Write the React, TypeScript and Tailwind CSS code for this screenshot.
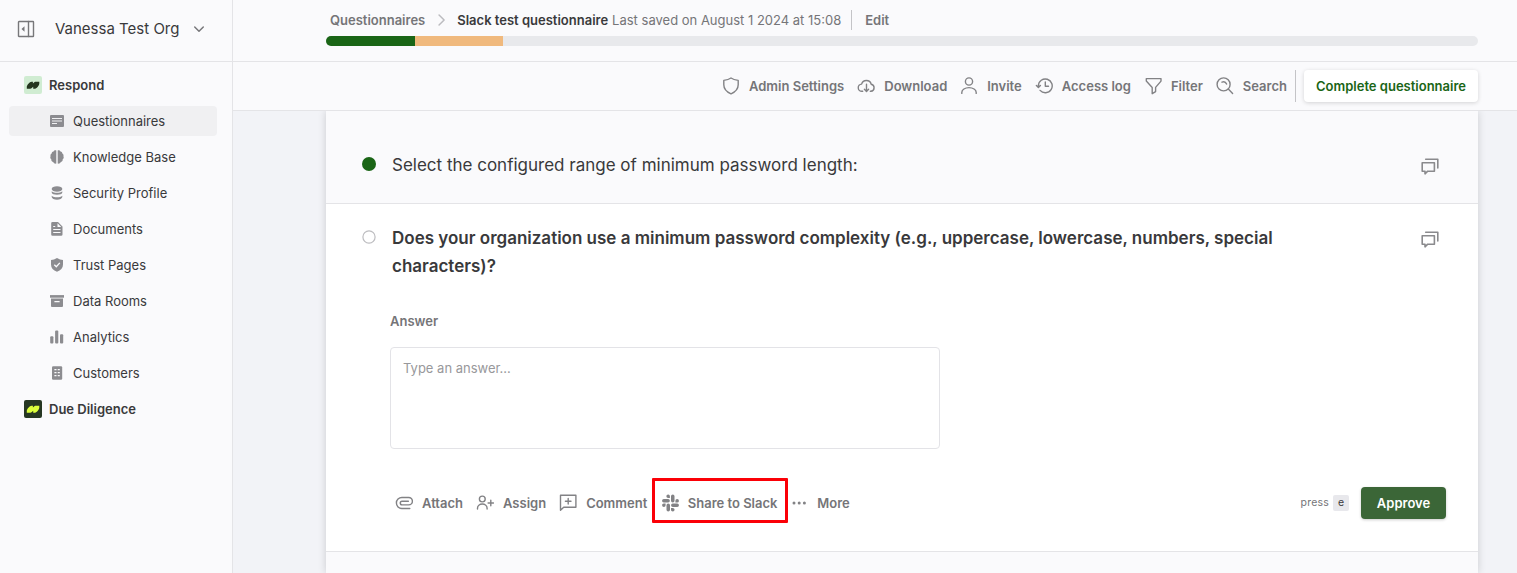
import type { ReactNode } from 'react';

type IconProps = { size?: number; className?: string; children: ReactNode };

function Stroke({ size = 18, className = 'text-[#828285]', children }: IconProps) {
  return (
    <svg
      width={size} height={size} viewBox="0 0 18 18"
      fill="none" stroke="currentColor" strokeWidth="1.4"
      strokeLinecap="round" strokeLinejoin="round"
      className={`shrink-0 ${className}`}
    >
      {children}
    </svg>
  );
}

function Solid({ size = 14, className = '', children }: IconProps) {
  return (
    <svg width={size} height={size} viewBox="0 0 14 14" fill="currentColor" className={`shrink-0 ${className}`}>
      {children}
    </svg>
  );
}

function Logo({ className }: { className: string }) {
  return (
    <svg width="18" height="18" viewBox="0 0 18 18" fill="currentColor" className={`shrink-0 rounded-xs ${className}`}>
      <path d="M2.800 12.700v-1.700C2.800 9 5.600 5.700 7.600 5.700h1.300v1.900l1.700-1.500c.4-.3.700-.4 1.200-.4h3.500v1.700c0 2-2.800 5.300-4.800 5.300H9.200v-1.900l-1.700 1.500c-.4.3-.7.400-1.200.400H2.800Z" />
    </svg>
  );
}

const NAV_ITEMS = [
  {
    label: 'Questionnaires',
    icon: (
      <Solid>
        <path fillRule="evenodd" d="M1 1h12a1 1 0 0 1 1 1v10a1 1 0 0 1-1 1H1a1 1 0 0 1-1-1V2a1 1 0 0 1 1-1Zm1 3v1h10V4H2Zm0 2.500v1h10v-1H2ZM2 9v1h5V9H2Z" />
      </Solid>
    ),
  },
  {
    label: 'Knowledge Base',
    icon: (
      <Solid>
        <path d="M6.300 .4v13.200C5 14 3.600 13.300 3.300 12 1.900 11.800 1.100 10.700 1.400 9.500.2 8.600 0 7.300.6 6.300.2 5 .8 4 1.700 3.600c0-1.300.8-2 1.800-2.100C4 .5 5.200-.1 6.300.4Z" />
        <path d="M7.700 .4v13.200c1.300.4 2.700-.3 3-1.600 1.400-.2 2.200-1.300 1.900-2.500 1.200-.9 1.400-2.200.8-3.200.4-1.300-.2-2.300-1.100-2.700 0-1.300-.8-2-1.800-2.100C10 .5 8.800-.1 7.700.4Z" />
      </Solid>
    ),
  },
  {
    label: 'Security Profile',
    icon: (
      <Solid>
        <ellipse cx="7" cy="3" rx="5.300" ry="2.700" />
        <path d="M1.700 5.300c2.400 2 8.200 2 10.600 0v1.100c0 3-10.600 3-10.600 0V5.300Z" />
        <path d="M1.700 9.800c2.400 2 8.200 2 10.600 0v1.300c0 3.400-10.600 3.400-10.600 0V9.800Z" />
      </Solid>
    ),
  },
  {
    label: 'Documents',
    icon: (
      <Solid>
        <path fillRule="evenodd" d="M2.500 0H8l4.500 4.500v8a1.300 1.300 0 0 1-1.300 1.300H2.500a1.300 1.300 0 0 1-1.300-1.300V1.300A1.300 1.300 0 0 1 2.500 0Zm5 1.200V5h3.800L7.500 1.200ZM3.200 4v1h2V4h-2Zm0 3v1h7.300V7H3.200Zm0 3v1h7.300v-1H3.200Z" />
      </Solid>
    ),
  },
  {
    label: 'Trust Pages',
    icon: (
      <Solid>
        <path d="M7 0c2 1.300 4 1.800 6 1.900v4.600c0 3.500-2.300 5.800-6 7.300-3.700-1.500-6-3.800-6-7.300V1.900C3 1.800 5 1.300 7 0Z" />
        <path d="m4.300 6.700 2 2 3.500-3.800" fill="none" stroke="#fafafc" strokeWidth="1.300" />
      </Solid>
    ),
  },
  {
    label: 'Data Rooms',
    icon: (
      <Solid>
        <path d="M0 1.100h14v2.600H0z" />
        <path fillRule="evenodd" d="M1 4.400h12v7.400c0 .8-.5 1.200-1.200 1.200H2.200C1.500 13 1 12.600 1 11.800V4.400ZM4.400 7v1.200h5.200V7H4.400Z" />
      </Solid>
    ),
  },
  {
    label: 'Analytics',
    icon: (
      <Solid>
        <rect x="0.200" y="6.200" width="3.200" height="7.300" rx="1" />
        <rect x="5.100" y="0.400" width="3.200" height="13.100" rx="1" />
        <rect x="10" y="4.200" width="3.200" height="9.300" rx="1" />
      </Solid>
    ),
  },
  {
    label: 'Customers',
    icon: (
      <Solid>
        <rect x="2" y="0.200" width="10.200" height="13.600" rx="1.200" />
        <path d="M4.400 3h2.100v1.200H4.400zM7.700 3h2.100v1.200H7.700zM4.400 6h2.100v1.200H4.400zM7.700 6h2.100v1.200H7.700zM4.400 9h2.100v1.200H4.400zM7.700 9h2.100v1.200H7.700z" fill="#fafafc" />
      </Solid>
    ),
  },
];

const TOOLBAR = [
  {
    label: 'Admin Settings',
    icon: <Stroke><path d="M9 1c2 1.400 4.300 2 7.200 2.400v4.300c0 3.800-3.200 7.300-7.200 9.100-4-1.800-7.200-5.300-7.200-9.100V3.400C4.700 3 7 2.400 9 1Z" /></Stroke>,
  },
  {
    label: 'Download',
    icon: (
      <Stroke>
        <path d="M5.700 14.300H5.100a3.600 3.600 0 0 1-.5-7.200 5 5 0 0 1 9.600.1 3.600 3.600 0 0 1-.3 7.100h-.6M9.500 7.300v7M7.400 12.300 9.500 14.400l2.100-2.100" />
      </Stroke>
    ),
  },
  {
    label: 'Invite',
    icon: <Stroke><circle cx="9" cy="4.500" r="3.600" /><path d="M1.800 16.400v-1a7.200 4.800 0 0 1 14.400 0v1" /></Stroke>,
  },
  {
    label: 'Access log',
    icon: <Stroke><path d="M3.400 10.300V8.700a6.900 6.900 0 1 1 1.700 4.700M1.400 8.500l2 2 2-2M10.300 5v4.200h3.200" /></Stroke>,
  },
  {
    label: 'Filter',
    icon: <Stroke><path d="M2.300 1.600h14.700v2.500L11.600 10.400v4.200L8.200 16.700v-6.300L2.300 4.100V1.600Z" /></Stroke>,
  },
  {
    label: 'Search',
    icon: <Stroke><circle cx="7.600" cy="7.400" r="6.500" /><path d="m12.300 12.100 4.300 4.300M6 5.200a3.600 3.600 0 0 1 4.600 1.800" /></Stroke>,
  },
];

function ThreadIcon() {
  return (
    <Stroke className="text-[#8a8a8d]">
      <path d="M1.200 4.700h12.200v8.500H6.700L4 15.800v-2.600H1.200V4.700ZM4.700 1.300h12.100V10" strokeWidth="1.600" />
    </Stroke>
  );
}

function Action({ label, icon, className = '' }: { label: string; icon: ReactNode; className?: string }) {
  return (
    <button className={`flex items-center gap-[9px] whitespace-nowrap font-semibold leading-5 ${className}`}>
      {icon}
      {label}
    </button>
  );
}

function Sidebar() {
  return (
    <aside className="w-[233px] shrink-0 border-r border-[#e4e4e7]">
      <div className="flex h-[62px] items-center border-b border-[#e4e4e7] pb-[3px] pl-[17px]">
        <Stroke className="text-[#77777a]">
          <rect x="1.500" y="1.500" width="15" height="15" rx="0.500" />
          <path d="M11.500 1.500v15" />
          <path d="M7.500 6.300v5.400L4.500 9l3-2.700Z" fill="currentColor" stroke="none" />
        </Stroke>
        <span className="ml-5 text-[15px] leading-6">Vanessa Test Org</span>
        <Stroke size={14} className="ml-[13px] text-[#77777a]">
          <path d="m3.500 6.500 5.500 5.500 5.500-5.500" strokeWidth="1.900" />
        </Stroke>
      </div>

      <nav className="px-[9px] pt-[5px] text-[13px] leading-5">
        <div className="flex h-9 items-center gap-[7px] pl-[15px] font-semibold">
          <Logo className="bg-[#d0ecd2] text-[#24351f]" />
          Respond
        </div>
        <ul>
          {NAV_ITEMS.map((item, i) => (
            <li key={item.label} className="py-[3px]">
              <a className={`flex h-[30px] w-[208px] items-center gap-[9px] rounded pl-[41px] ${i === 0 ? 'bg-[#f0f0f2]' : ''}`}>
                <span className="flex text-[#8c8c90]">{item.icon}</span>
                {item.label}
              </a>
            </li>
          ))}
        </ul>
        <div className="flex h-9 items-center gap-[7px] pl-[15px] font-semibold">
          <Logo className="bg-[#263723] text-[#dcff3c]" />
          Due Diligence
        </div>
      </nav>
    </aside>
  );
}

function Header() {
  return (
    <header className="h-[62px] border-b border-[#e4e4e7] pl-[93px] pr-[39px] text-[13px] leading-5 text-[#757578]">
      <div className="flex h-9 items-center pl-1 pt-1">
        <span className="font-semibold">Questionnaires</span>
        <Stroke size={14} className="mx-[9px] text-[#bbbbbf]">
          <path d="m6.500 2.500 6.500 6.500-6.500 6.500" strokeWidth="1.900" />
        </Stroke>
        <span className="font-semibold text-[#39393b]">Slack test questionnaire</span>
        <span className="ml-1">Last saved on August 1 2024 at 15:08</span>
        <span className="ml-2.5 h-5 w-px bg-[#c4c4c7]" />
        <span className="ml-[13px] font-semibold">Edit</span>
      </div>
      <div className="flex h-2.5 overflow-hidden rounded-full bg-[#e8e9ec]">
        <div className="w-[89px] bg-[#1a6516]" />
        <div className="w-[88px] bg-[#f0b97d]" />
      </div>
    </header>
  );
}

function Toolbar() {
  return (
    <div className="flex h-[49px] items-center justify-end border-b border-[#e4e4e7] pr-[39px] text-[13px] leading-5 text-[#757578]">
      <div className="flex gap-[13px]">
        {TOOLBAR.map((t) => (
          <Action key={t.label} label={t.label} icon={t.icon} />
        ))}
      </div>
      <span className="ml-2 h-8 w-px bg-[#c4c4c7]" />
      <button className="ml-2 h-8 w-[174px] whitespace-nowrap rounded bg-white font-semibold leading-5 text-[#1a6516] shadow-[0_1px_4px_rgba(0,0,0,0.16)]">
        Complete questionnaire
      </button>
    </div>
  );
}

function Question() {
  return (
    <section className="h-[348px] border-b border-[#e4e4e7] bg-white px-8 pt-5">
      <div className="flex items-start pl-1">
        <svg width="14" height="14" viewBox="0 0 14 14" className="mt-1.5 shrink-0">
          <circle cx="7" cy="7" r="6.100" fill="none" stroke="#bdbdc0" strokeWidth="1.200" />
        </svg>
        <h2 className="ml-4 w-[910px] text-[17px] font-semibold leading-7">
          Does your organization use a minimum password complexity (e.g., uppercase, lowercase, numbers, special
          characters)?
        </h2>
        <div className="ml-auto mr-[7px] mt-[7px]">
          <ThreadIcon />
        </div>
      </div>

      <div className="ml-8 mt-[31px]">
        <label className="block text-[13px] font-semibold leading-5 text-[#757578]">Answer</label>
        <textarea
          placeholder="Type an answer..."
          className="mt-4 block h-[102px] w-[550px] resize-none rounded border border-[#e3e3e7] px-3 py-2.5 text-[13px] leading-5 placeholder:text-[#98989b]"
        />
      </div>

      <div className="mt-[29px] flex h-[50px] items-center text-[13px] leading-5 text-[#757578]">
        <div className="flex h-full items-center pl-[37px]">
          <Action
            label="Attach"
            icon={<Stroke><path d="M14.800 14.500H6.900a5.500 5.500 0 0 1 0-11h6.800a3.700 3.700 0 0 1 0 7.400H7.100a1.850 1.850 0 0 1 0-3.700h6.300" /></Stroke>}
          />
          <Action
            label="Assign"
            className="ml-[13px]"
            icon={<Stroke><circle cx="6.300" cy="5" r="2.900" /><path d="M1.500 15v-.8a4.800 4.200 0 0 1 9.600 0v.8M14.800 6.300v5.400M12.100 9h5.400" /></Stroke>}
          />
          <Action
            label="Comment"
            className="ml-[13px]"
            icon={<Stroke><path d="M1.500 16.300v-15h15.400v12H4.700l-3.200 3ZM9.200 4.500v5.600M6.400 7.300h5.600" /></Stroke>}
          />
          <div className="ml-[4.500px] flex h-[45px] w-[136px] items-center self-start rounded-[1px] border-[3px] border-[#fb0007] pl-1.5 pt-[5px]">
            <Action
              label="Share to Slack"
              icon={
                <svg width="18" height="18" viewBox="-0.500 0 18 18" fill="currentColor" className="text-[#828285]">
                  <path d="M6.600.6a1.700 1.700 0 0 0 0 3.500h1.800V2.300A1.700 1.700 0 0 0 6.600.6ZM6.600 5H2.300a1.700 1.700 0 0 0 0 3.500h4.300a1.700 1.700 0 0 0 0-3.500Z" />
                  <path d="M17.400 6.700a1.700 1.700 0 0 0-3.500 0v1.800h1.800a1.700 1.700 0 0 0 1.700-1.800ZM13 6.700V2.300a1.700 1.700 0 0 0-3.500 0v4.400a1.700 1.700 0 0 0 3.500 0Z" />
                  <path d="M11.300 17.400a1.700 1.700 0 0 0 0-3.500H9.500v1.800c0 1 .8 1.700 1.800 1.700ZM11.300 13h4.400a1.700 1.700 0 0 0 0-3.500h-4.400a1.700 1.700 0 0 0 0 3.500Z" />
                  <path d="M.6 11.300a1.700 1.700 0 0 0 3.500 0V9.500H2.300c-1 0-1.700.8-1.700 1.800ZM5 11.300v4.400a1.700 1.700 0 0 0 3.500 0v-4.400a1.700 1.700 0 0 0-3.500 0Z" />
                </svg>
              }
            />
          </div>
          <Action
            label="More"
            className="ml-[2.500px]"
            icon={
              <svg width="18" height="18" viewBox="0 0 18 18" fill="currentColor" className="text-[#828285]">
                <circle cx="4" cy="9" r="1.500" /><circle cx="9.200" cy="9" r="1.500" /><circle cx="14.400" cy="9" r="1.500" />
              </svg>
            }
          />
        </div>
        <div className="ml-auto flex items-center">
          <span className="text-[10.5px] tracking-[0.2px]">press</span>
          <kbd className="ml-1 flex size-4 items-center justify-center rounded-xs bg-[#e8e8ec] font-[Inter,sans-serif] text-[10.5px] text-[#39393b]">
            e
          </kbd>
          <button className="ml-3 h-8 w-[85px] rounded bg-[#3b6637] font-semibold leading-5 text-white shadow-[0_1px_3px_rgba(0,0,0,0.2)]">
            Approve
          </button>
        </div>
      </div>
    </section>
  );
}

export default function App() {
  return (
    <div className="flex h-[573px] w-[1517px] overflow-hidden bg-[#fafafc] font-[Inter,sans-serif] text-[#39393b]">
      <Sidebar />
      <div className="flex min-w-0 flex-1 flex-col">
        <Header />
        <Toolbar />
        <main className="min-h-0 flex-1 overflow-hidden bg-[#f2f3f7] pl-[93px] pr-[39px]">
          <div className="h-full bg-[#fafafc] shadow-[0_0_8px_rgba(0,0,0,0.16)]">
            <section className="flex h-[93px] items-start border-b border-[#e4e4e7] px-8 pt-10">
              <span className="ml-1 mt-1.5 size-3.5 rounded-full bg-[#1a6516]" />
              <h2 className="ml-4 text-[17px] leading-7">
                Select the configured range of minimum password length:
              </h2>
              <div className="ml-auto mr-[7px] mt-[7px]">
                <ThreadIcon />
              </div>
            </section>
            <Question />
          </div>
        </main>
      </div>
    </div>
  );
}
